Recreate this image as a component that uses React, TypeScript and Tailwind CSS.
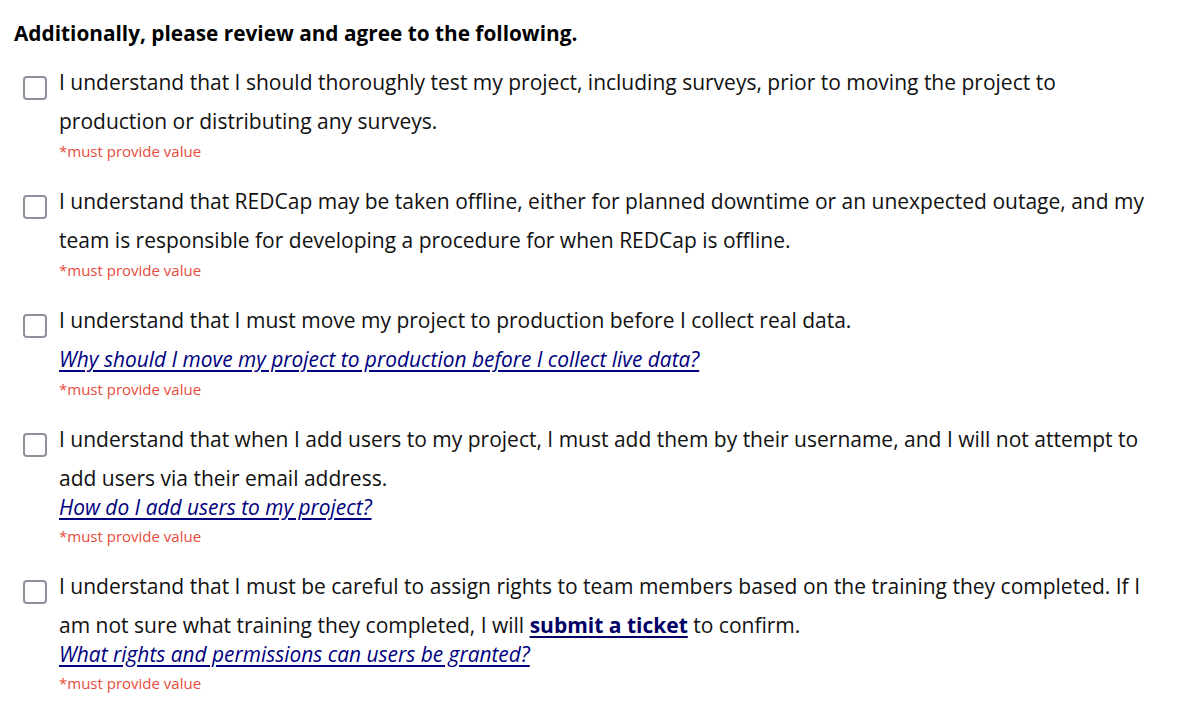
import React from 'react';

type Item = {
  text: React.ReactNode;
  help?: { label: string; inline?: boolean };
};

const ITEMS: Item[] = [
  {
    text: 'I understand that I should thoroughly test my project, including surveys, prior to moving the project to production or distributing any surveys.',
  },
  {
    text: 'I understand that REDCap may be taken offline, either for planned downtime or an unexpected outage, and my team is responsible for developing a procedure for when REDCap is offline.',
  },
  {
    text: 'I understand that I must move my project to production before I collect real data.',
    help: { label: 'Why should I move my project to production before I collect live data?', inline: true },
  },
  {
    text: 'I understand that when I add users to my project, I must add them by their username, and I will not attempt to add users via their email address.',
    help: { label: 'How do I add users to my project?' },
  },
  {
    text: (
      <>
        I understand that I must be careful to assign rights to team members based on the training they completed. If I am
        not sure what training they completed, I will{' '}
        <a href="#" className="font-bold text-[#000066] underline underline-offset-[3px]">
          submit a ticket
        </a>{' '}
        to confirm.
      </>
    ),
    help: { label: 'What rights and permissions can users be granted?' },
  },
];

function Checkbox() {
  return <span className="mt-[13px] block h-[24px] w-[24px] shrink-0 rounded-[4px] border-2 border-[#8f8f9d] bg-white" />;
}

export default function App() {
  return (
    <div className="min-h-screen bg-white pt-[19px] pl-[14px] pr-[40px] text-[#111] [font-family:'Open_Sans',sans-serif]">
      <h3 className="text-[20.8px] font-bold leading-[28px] text-black">
        Additionally, please review and agree to the following.
      </h3>

      <div className="mt-[16px] flex flex-col gap-[21px]">
        {ITEMS.map((item, i) => (
          <div key={i} className="flex items-start gap-[12px] pl-[9px]">
            <Checkbox />
            <div className="min-w-0 flex-1">
              <div className="text-[21px] leading-[39px]">
                {item.text}
                {item.help?.inline && (
                  <>
                    <br />
                    <a href="#" className="text-[20.9px] italic text-[#000080] underline underline-offset-[3px]">
                      {item.help.label}
                    </a>
                  </>
                )}
              </div>
              {item.help && !item.help.inline && (
                <div className="-mt-[1px] mb-[9px] text-[20.9px] leading-[20px]">
                  <a href="#" className="italic text-[#000080] underline underline-offset-[3px]">
                    {item.help.label}
                  </a>
                </div>
              )}
              <div className="text-[15px] leading-[20px] text-[#e74c3c]">*must provide value</div>
            </div>
          </div>
        ))}
      </div>
    </div>
  );
}
